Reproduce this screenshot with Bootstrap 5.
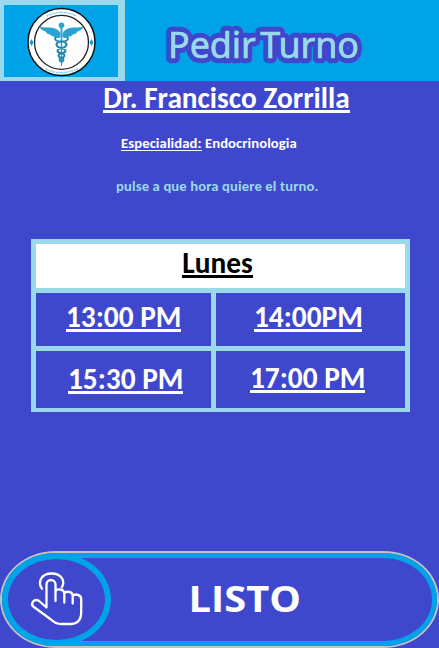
<!DOCTYPE html>
<html lang="es">
<head>
<meta charset="utf-8">
<meta name="viewport" content="width=device-width, initial-scale=1">
<title>Pedir Turno</title>
<link href="https://cdn.jsdelivr.net/npm/bootstrap@5.3.0/dist/css/bootstrap.min.css" rel="stylesheet">
<style>
:root{--azul:#3f48cc;--cielo:#00a2e8;--claro:#99d9ea}
body{background:var(--azul);font-family:Calibri,Carlito,Lato,"Open Sans",sans-serif;font-weight:700;height:648px;overflow:hidden}
.top{background:var(--cielo);height:81px}
.logo-box{width:125px;background:var(--claro);padding:5px 7px 4px 4px}
.logo-box svg{display:block;background:var(--cielo)}
.u{display:block;white-space:nowrap;border-bottom:3px solid currentColor;font-size:29.33px;line-height:30px;height:30px;text-align:center}
.main{height:470px}
.name{margin:2px 0 0 103px;width:247px}
.spec{font-size:14.67px;line-height:16px;margin:22px 0 0 121px;height:16px;white-space:nowrap;display:flex}
.spec u{text-decoration:none;border-bottom:1px solid #fff;height:16px;width:81px;letter-spacing:.1px;margin-right:3px}
.spec span{letter-spacing:.08px}
.hint{color:var(--claro);font-size:14.67px;line-height:16px;margin:27px 0 0 116px;white-space:nowrap;letter-spacing:.12px}
.slots{display:grid;grid-template:44px 53px 57px/175px 189px;gap:5px;padding:5px 5px 4px;background:var(--claro);width:379px;margin:45px 0 0 31px}
.slots>div{background:var(--azul);color:#fff;padding:9px 0 0 30px}
.slots>.day{grid-column:span 2;background:#fff;color:#000;padding:4px 0 0 146px}
.day .u{width:71px}
.slot .u{width:115px}
.slots>.s14{padding-left:38px}
.s14 .u{width:108px}
.slots>.s15{padding:13px 0 0 32px}
.slots>.s17{padding:12px 0 0 34px}
.done{height:97px;border:2px solid #c3c3c3;border-radius:56px/49px;background:var(--azul);color:#fff;padding:0}
.done-in{height:93px;border:5px solid var(--cielo);border-radius:54px/47px}
.ring{width:109px;height:93px;margin:-5px 0 0 -5px;border:6px solid var(--cielo);border-radius:50%}
</style>
</head>
<body>
<header class="top d-flex">
  <div class="logo-box">
    <svg width="114" height="72" viewBox="4 5 114 72">
      <circle cx="61.5" cy="42" r="33.500" fill="#fff" stroke="#111" stroke-width="1.500"/>
      <circle cx="61.5" cy="42.300" r="27" fill="#fff" stroke="#222" stroke-width="1.300"/>
      <path d="M46.500 16.200Q61.500 8.500 76.500 16.200M46 69Q61.500 76.500 78 68.500" fill="none" stroke="#8ed0e8" stroke-width="1.500" stroke-dasharray="2 .6"/>
      <path d="M31.500 39l2 3.500-2 3.500-2-3.500zM91.500 39l2 3.500-2 3.500-2-3.500z" fill="#189bd0"/>
      <g fill="#2aa3d2">
        <path d="M60.500 33C56 26 49 28 39.500 27c2 3 4 4 6 4.500 1 2 3 3 4.500 3 2 2 4 2.500 5 2 1 2 4 2 5.500.500zM62.500 33C67 26 74 28 83.500 27c-2 3-4 4-6 4.500-1 2-3 3-4.500 3-2 2-4 2.500-5 2-1 2-4 2-5.500.500z"/>
        <circle cx="61.500" cy="25.200" r="2.800"/>
        <path d="M60.500 27h2l-.5 39h-1z"/>
      </g>
      <path d="M56 36.500c-3 4 2 5 5.500 5s6 2 4.500 4.500-9 2-8.500 5 7 1.500 7 4.500-5 2-5 4 3 2 3 3M67 36.500c3 4-2 5-5.500 5s-6 2-4.500 4.500 9 2 8.500 5-7 1.500-7 4.500 5 2 5 4-3 2-3 3" fill="none" stroke="#2387af" stroke-width="2"/>
    </svg>
  </div>
  <svg width="314" height="81" viewBox="125 0 314 81" role="img" aria-label="Pedir Turno">
    <text x="168" y="58" textLength="191" lengthAdjust="spacingAndGlyphs" word-spacing="-5" font-family="Noto Sans, sans-serif" font-weight="400" font-size="37" fill="#99d9ea" stroke="#3f48cc" stroke-width="10.500" stroke-linejoin="round" paint-order="stroke">Pedir Turno</text>
    <text x="168" y="58" textLength="191" lengthAdjust="spacingAndGlyphs" word-spacing="-5" font-family="Noto Sans, sans-serif" font-weight="400" font-size="37" fill="#99d9ea" stroke="#99d9ea" stroke-width=".5" aria-hidden="true">Pedir Turno</text>
  </svg>
</header>
<main class="main d-flex flex-column align-items-start text-white">
  <h1 class="u name fw-bold mb-0">Dr. Francisco Zorrilla</h1>
  <p class="spec mb-0"><u>Especialidad:</u><span>Endocrinologia</span></p>
  <p class="hint mb-0">pulse a que hora quiere el turno.</p>
  <section class="slots">
    <div class="day"><span class="u">Lunes</span></div>
    <div class="slot"><span class="u">13:00 PM</span></div>
    <div class="slot s14"><span class="u">14:00PM</span></div>
    <div class="slot s15"><span class="u">15:30 PM</span></div>
    <div class="slot s17"><span class="u">17:00 PM</span></div>
  </section>
</main>
<button class="done d-block w-100" type="button">
  <span class="done-in d-flex align-items-start">
    <span class="ring d-block flex-shrink-0">
      <svg class="d-block" width="97" height="81" viewBox="8 559 97 81" fill="none" stroke="#fff" stroke-width="2.300" stroke-linejoin="round" stroke-linecap="round">
        <path d="M46.500 607.500V584.500a4.500 4.500 0 0 1 9 0V601M55.500 591.500c1-3 8.300-3 8.800 2v9M64.300 593.500c2-3 8-2 8.400 2v8M72.700 596c2.500-3 8.500-1 8.500 3v13c0 8-4 12-11 12H61c-4 0-7-1.500-10-4.500L33.200 606.500c-3-3 .8-8 5.300-6l8 7"/>
        <path d="M42.500 589.500c-6-8-.5-16 9-16s14.500 7 10 14.500" stroke-linecap="butt"/>
      </svg>
    </span>
    <svg width="200" height="83" viewBox="111 558 200 83" role="img" aria-label="LISTO">
      <text x="188.500" y="612" textLength="112.500" lengthAdjust="spacingAndGlyphs" font-family="Open Sans, sans-serif" font-weight="700" font-size="36.500" fill="#fff">LISTO</text>
    </svg>
  </span>
</button>
<script src="https://cdn.jsdelivr.net/npm/bootstrap@5.3.0/dist/js/bootstrap.bundle.min.js"></script>
</body>
</html>
